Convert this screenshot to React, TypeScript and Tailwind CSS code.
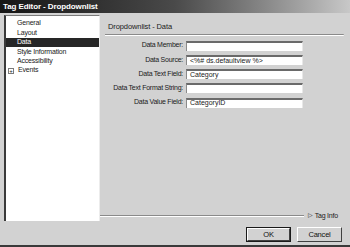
import React from "react"

const navItems = [
  {label: "General"},
  {label: "Layout"},
  {label: "Data", selected: true},
  {label: "Style Information"},
  {label: "Accessibility"},
  {label: "Events", expandable: true},
]

const fields = [
  {label: "Data Member:", value: ""},
  {label: "Data Source:", value: "<%# ds.defaultview %>"},
  {label: "Data Text Field:", value: "Category"},
  {label: "Data Text Format String:", value: ""},
  {label: "Data Value Field:", value: "CategoryID"},
]

const font = {fontFamily: '"Liberation Sans", Arial, sans-serif'}

function DialogButton({children, isDefault}: {children: React.ReactNode; isDefault?: boolean}) {
  return (
    <div
      className={`h-[15px] w-[45px] ${isDefault ? "border border-[#1a1a1a]" : ""}`}
    >
      <div className="flex h-full w-full items-center justify-center border border-t-white border-l-white border-r-[#404040] border-b-[#404040] bg-[#d2d2d2] text-[7.5px] tracking-[-0.2px] text-[#111]">
        {children}
      </div>
    </div>
  )
}

export default function App() {
  return (
    <div
      className="flex h-[247px] w-[350px] flex-col overflow-hidden bg-[#d2d2d2] border-b-2 border-b-[#3a3a3a]"
      style={font}
    >
      {/* Title bar */}
      <div className="flex h-[13px] items-center bg-gradient-to-r from-[#161616] via-[#4a4a4a] to-[#c8c8c8] pl-[3px] text-[8px] font-bold tracking-[-0.1px] text-white">
        Tag Editor - Dropdownlist
      </div>

      {/* Main area */}
      <div className="mt-[2px] flex h-[206px] pl-[4px]">
        <div className="w-[96px] border-l-2 border-t border-l-[#3a3a3a] border-t-[#7a7a7a] border-r border-r-[#ececec] bg-white pt-[3px]">
          {navItems.map((item) => (
            <div
              key={item.label}
              className={`flex h-[9.4px] items-center text-[7px] tracking-[-0.2px] ${
                item.selected ? "bg-[#262626] text-white" : "text-[#1a1a1a]"
              }`}
            >
              {item.expandable ? (
                <>
                  <span className="ml-[2px] flex h-[6px] w-[6px] items-center justify-center border border-[#7a7a7a] text-[6px] leading-none">
                    +
                  </span>
                  <span className="ml-[4px]">{item.label}</span>
                </>
              ) : (
                <span className="ml-[11px]">{item.label}</span>
              )}
            </div>
          ))}
        </div>

        <div className="flex flex-1 flex-col">
          <div className="pl-[8px] pt-[6px] text-[7.5px] tracking-[-0.1px] text-[#1a1a1a]">
            Dropdownlist - Data
          </div>
          <div className="ml-[5px] mr-[6px] mt-[2px] h-[2px] rounded-r-full border-t border-t-[#8a8a8a] border-b border-b-white" />

          <div className="mt-[4px] flex flex-col gap-[3.75px]">
            {fields.map((f) => (
              <div key={f.label} className="flex items-center">
                <div className="w-[86px] pr-[3px] text-right text-[7px] tracking-[-0.25px] text-[#1a1a1a]">
                  {f.label}
                </div>
                <div className="flex h-[10px] w-[117px] items-center border-t-2 border-l border-t-[#6a6a6a] border-l-[#8a8a8a] border-r border-r-[#e8e8e8] bg-white pl-[3px] text-[7px] text-[#1a1a1a]">
                  {f.value}
                </div>
              </div>
            ))}
          </div>

          <div className="mt-auto flex items-center pr-[12px]">
            <div className="h-[2px] flex-1 border-t border-t-[#8a8a8a] border-b border-b-white" />
            <div className="ml-[4px] flex items-center text-[7px] tracking-[-0.2px] text-[#1a1a1a]">
              <span className="mr-[2px] text-[6px]">▷</span>
              Tag Info
            </div>
          </div>
        </div>
      </div>

      {/* Footer */}
      <div className="mt-[6px] flex justify-end gap-[6px] pr-[8px]">
        <DialogButton isDefault>OK</DialogButton>
        <DialogButton>Cancel</DialogButton>
      </div>
    </div>
  )
}
